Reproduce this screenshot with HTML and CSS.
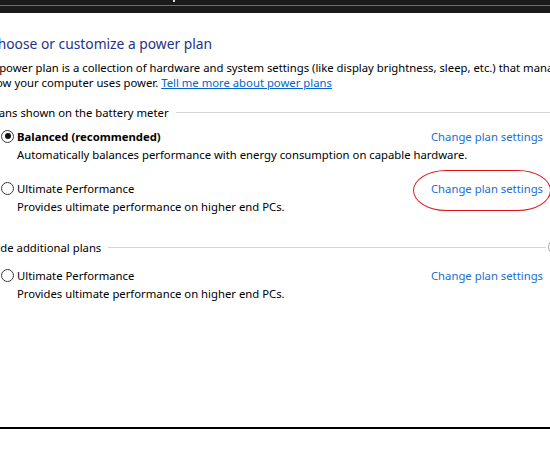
FILE: index.html
```html
<!DOCTYPE html>
<html>
<head>
<meta charset="utf-8">
<link rel="stylesheet" href="styles.css">
</head>
<body>
<div class="topbar"><div class="topline"></div><div class="tick"></div></div>
<div class="page">
  <h1 class="title">Choose or customize a power plan</h1>
  <p class="intro">A power plan is a collection of hardware and system settings (like display brightness, sleep, etc.) that manages<br>how your computer uses power. <a href="#" class="link">Tell me more about power plans</a></p>

  <div class="group-head"><span>Plans shown on the battery meter</span><div class="rule"></div></div>
  <div class="plan first">
    <div class="plan-row">
      <span class="radio checked"></span>
      <span class="plan-name bold">Balanced (recommended)</span>
      <a href="#" class="change">Change plan settings</a>
    </div>
    <div class="plan-desc">Automatically balances performance with energy consumption on capable hardware.</div>
  </div>
  <div class="plan">
    <div class="plan-row">
      <span class="radio"></span>
      <span class="plan-name">Ultimate Performance</span>
      <a href="#" class="change circled">Change plan settings</a>
    </div>
    <div class="plan-desc">Provides ultimate performance on higher end PCs.</div>
  </div>

  <div class="group-head second"><span>Hide additional plans</span><div class="rule"></div><span class="toggle"></span></div>
  <div class="plan first2">
    <div class="plan-row">
      <span class="radio"></span>
      <span class="plan-name">Ultimate Performance</span>
      <a href="#" class="change">Change plan settings</a>
    </div>
    <div class="plan-desc">Provides ultimate performance on higher end PCs.</div>
  </div>
</div>
<div class="bottomline"></div>
</body>
</html>
```
FILE: styles.css
```css
html, body { margin: 0; padding: 0; background: #fff; overflow: hidden; }
body { width: 550px; height: 450px; font-family: "Noto Sans", "Segoe UI", sans-serif; font-size: 11.3px; color: #000; position: relative; }
.topbar { height: 13px; background: #1b1b1b; position: relative; }
.topline { position: absolute; left: 0; right: 0; top: 5px; height: 1px; background: #6e6e6e; }
.tick { position: absolute; left: 173px; top: 0; width: 2px; height: 2px; background: #ddd; }
.page { margin-left: -11px; width: 600px; }
.title { margin: 0; padding-top: 21px; font-weight: normal; font-size: 13.8px; line-height: 20px; color: #1e3287; white-space: nowrap; }
.intro { margin: 6px 0 0; line-height: 15px; white-space: nowrap; }
.link { color: #0066cc; text-decoration: underline; }
.group-head { display: flex; align-items: center; margin-top: 14px; height: 16px; white-space: nowrap; }
.group-head .rule { flex: 0 0 auto; width: 400px; height: 1px; background: #d5d5d5; margin-left: 7px; }
.group-head.second { margin-top: 24px; }
.group-head.second .rule { width: 438px; }
.toggle { flex: 0 0 auto; width: 16px; height: 16px; border: 1px solid #a8a8a8; border-radius: 50%; margin-left: 2px; box-sizing: border-box; }
.plan { margin-left: 12px; margin-top: 17px; }
.plan.first { margin-top: 8px; }
.plan.first2 { margin-top: 12px; }
.plan-row { display: flex; align-items: center; height: 16px; width: 542px; white-space: nowrap; }
.radio { flex: 0 0 auto; width: 13px; height: 13px; border: 1px solid #3c3c3c; border-radius: 50%; box-sizing: border-box; margin-right: 3px; position: relative; }
.radio.checked::after { content: ""; position: absolute; left: 2.5px; top: 2.5px; width: 6px; height: 6px; border-radius: 50%; background: #111; }
.plan-name.bold { font-weight: bold; }
.change { margin-left: auto; color: #1c6dd0; text-decoration: none; position: relative; }
.circled::before { content: ""; position: absolute; left: -18px; right: -8px; top: -11px; bottom: -15px; border: 1px solid #e0161d; border-radius: 34px / 21px; }
.plan-desc { margin-left: 16px; margin-top: 3px; line-height: 16px; white-space: nowrap; }
.bottomline { position: absolute; left: 0; top: 427px; width: 550px; height: 2px; background: #000; }
```
